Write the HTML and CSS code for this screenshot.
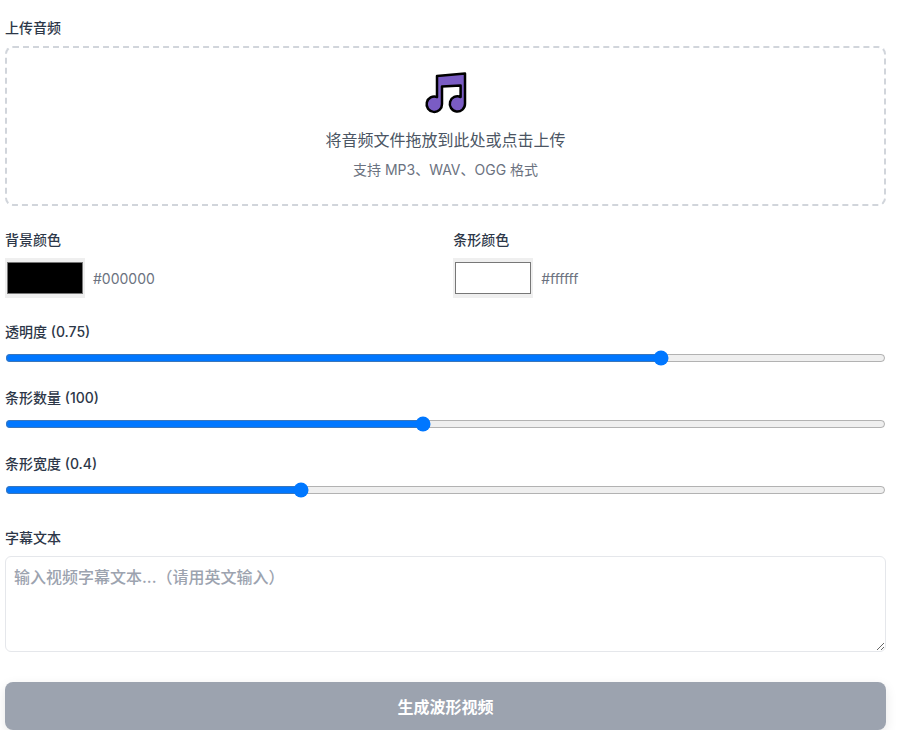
FILE: index.html
```html
<!DOCTYPE html>
<html lang="zh">
<head>
<meta charset="utf-8">
<title>波形视频</title>
<link rel="stylesheet" href="styles.css">
</head>
<body>
<form class="form">
  <section class="field upload-field">
    <label class="label">上传音频</label>
    <div class="dropzone">
      <svg class="note" width="46" height="46" viewBox="0 0 46 46" aria-hidden="true">
        <path d="M14 6 L42 3.500 V33.800 A7.600 7.600 0 1 1 37.600 27 V15.400 L19 16.400 V34 A7.700 7.700 0 1 1 14 27 Z" fill="#7a5cc4" stroke="#000" stroke-width="2.500" stroke-linejoin="round"/>
      </svg>
      <p class="drop-title">将音频文件拖放到此处或点击上传</p>
      <p class="drop-sub">支持 MP3、WAV、OGG 格式</p>
    </div>
  </section>
  <section class="colors">
    <div class="field">
      <label class="label">背景颜色</label>
      <div class="color-row">
        <input class="color" type="color" value="#000000">
        <span class="color-value">#000000</span>
      </div>
    </div>
    <div class="field">
      <label class="label">条形颜色</label>
      <div class="color-row">
        <input class="color" type="color" value="#ffffff">
        <span class="color-value">#ffffff</span>
      </div>
    </div>
  </section>
  <section class="sliders">
    <div class="field">
      <label class="label">透明度 (0.75)</label>
      <input class="range" type="range" min="0" max="1" step="0.001" value="0.749">
    </div>
    <div class="field">
      <label class="label">条形数量 (100)</label>
      <input class="range" type="range" min="10" max="200" step="1" value="100">
    </div>
    <div class="field">
      <label class="label">条形宽度 (0.4)</label>
      <input class="range" type="range" min="0.1" max="1" step="0.1" value="0.4">
    </div>
  </section>
  <section class="field text-field">
    <label class="label">字幕文本</label>
    <textarea class="textarea" placeholder="输入视频字幕文本...（请用英文输入）"></textarea>
  </section>
  <button class="submit" type="button" disabled>生成波形视频</button>
</form>
</body>
</html>
```

FILE: styles.css
```css
* { box-sizing: border-box; }
html, body { margin: 0; background: #fff; }
body {
  font-family: Inter, "Noto Sans CJK SC", sans-serif;
  color: #374151;
  padding: 20px 17px 0 5px;
}
.form { display: flex; flex-direction: column; }
.field { display: flex; flex-direction: column; }
.label {
  font-size: 14px;
  font-weight: 500;
  line-height: 16px;
  color: #2d3748;
  margin-bottom: 10px;
}
.dropzone {
  height: 160px;
  border: 2px dashed #d1d5db;
  border-radius: 8px;
  display: flex;
  flex-direction: column;
  align-items: center;
  padding-top: 22px;
}
.note { display: block; }
.drop-title {
  margin: 12px 0 0;
  font-size: 16px;
  line-height: 24px;
  color: #4b5563;
}
.drop-sub {
  margin: 8px 0 0;
  font-size: 14px;
  line-height: 20px;
  color: #6b7280;
}
.colors {
  display: grid;
  grid-template-columns: 1fr 1fr;
  column-gap: 15.400px;
  margin-top: 26px;
}
.color-row { display: flex; align-items: center; gap: 8px; }
.color {
  width: 80px;
  height: 40px;
  margin: 0;
  display: block;
  border: 0;
  padding: 4px 2px;
  background: #efefef;
}
.color::-webkit-color-swatch-wrapper { padding: 0; }
.color-value { font-size: 14px; color: #6b7280; }
.sliders { display: flex; flex-direction: column; gap: 24px; margin-top: 26px; }
.sliders .label { margin-bottom: 10px; }
.range {
  display: block;
  width: 100%;
  height: 16px;
  margin: 0;
  accent-color: #0077ff;
}
.text-field { margin-top: 32px; }
.textarea {
  display: block;
  width: 100%;
  height: 96px;
  border: 1px solid #e5e7eb;
  border-radius: 6px;
  padding: 8px;
  font-family: inherit;
  font-size: 16px;
  font-weight: 500;
  line-height: 24px;
  outline: none;
  resize: vertical;
}
.textarea::placeholder { color: #9ca3af; opacity: 1; }
.submit {
  margin-top: 30px;
  height: 48px;
  width: 100%;
  border: 0;
  border-radius: 8px;
  background: #9ca3af;
  color: #fff;
  font-family: inherit;
  font-size: 16px;
  font-weight: 600;
  box-shadow: 0 4px 12px rgba(0, 0, 0, 0.1);
}
```
